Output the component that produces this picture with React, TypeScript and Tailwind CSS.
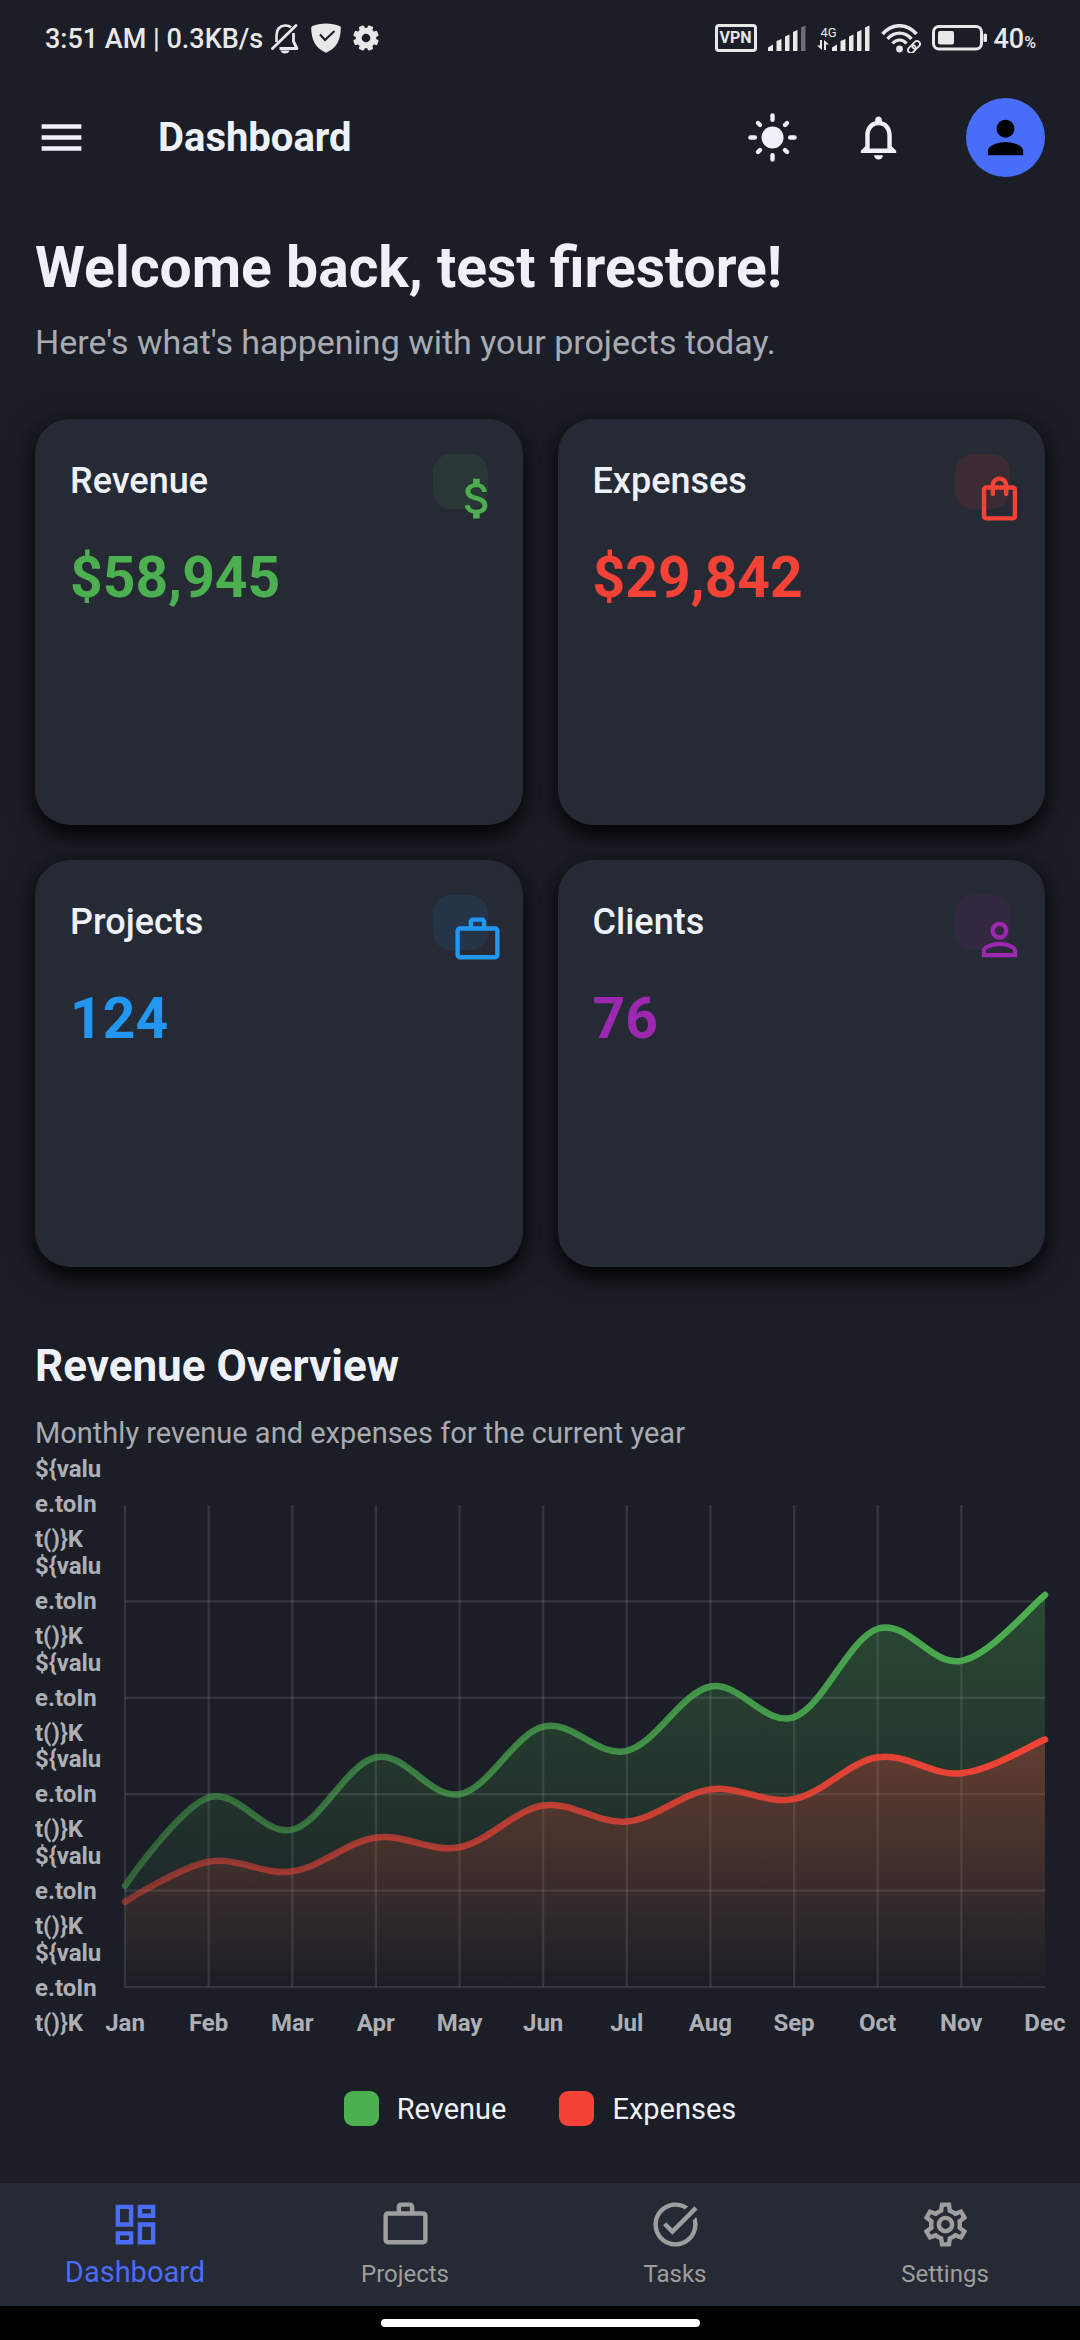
import type { ReactNode } from "react";
import type { IconType } from "react-icons";
import {
  MdAttachMoney,
  MdMenu,
  MdOutlineDashboard,
  MdOutlineNotifications,
  MdOutlinePersonOutline,
  MdOutlineSettings,
  MdOutlineShoppingBag,
  MdPerson,
  MdTaskAlt,
  MdWorkOutline,
} from "react-icons/md";

const MONTHS = ["Jan", "Feb", "Mar", "Apr", "May", "Jun", "Jul", "Aug", "Sep", "Oct", "Nov", "Dec"];
const REVENUE = [6.3, 11.8, 9.8, 14.3, 12, 16.2, 14.7, 18.7, 16.8, 22.3, 20.3, 24.4];
const EXPENSES = [5.3, 7.8, 7.2, 9.3, 8.7, 11.3, 10.3, 12.3, 11.7, 14.3, 13.3, 15.4];
const MAX = 30;
const TICKS = [30, 25, 20, 15, 10, 5];
const PLOT_W = 920;
const PLOT_H = 482;
const SMOOTHNESS = 0.35;

type Point = { x: number; y: number };

function toPoints(values: number[]): Point[] {
  return values.map((v, i) => ({
    x: (i * PLOT_W) / (values.length - 1),
    y: PLOT_H - (v / MAX) * PLOT_H,
  }));
}

function curve(points: Point[]): string {
  let d = `M${points[0].x} ${points[0].y}`;
  let tx = 0;
  let ty = 0;
  for (let i = 1; i < points.length; i++) {
    const prev = points[i - 1];
    const cur = points[i];
    const next = points[Math.min(i + 1, points.length - 1)];
    const c1 = { x: prev.x + tx, y: prev.y + ty };
    tx = ((next.x - prev.x) / 2) * SMOOTHNESS;
    ty = ((next.y - prev.y) / 2) * SMOOTHNESS;
    d += ` C${c1.x} ${c1.y} ${cur.x - tx} ${cur.y - ty} ${cur.x} ${cur.y}`;
  }
  return d;
}

function Series({ id, values, color }: { id: string; values: number[]; color: string }) {
  const line = curve(toPoints(values));
  return (
    <g>
      <defs>
        <linearGradient id={`${id}-fill`} x1="0" y1="0" x2="0" y2="1">
          <stop offset="0" stopColor={color} stopOpacity="0.3" />
          <stop offset="1" stopColor={color} stopOpacity="0" />
        </linearGradient>
        <linearGradient id={`${id}-line`} x1="0" y1="0" x2="1" y2="0">
          <stop offset="0" stopColor={color} stopOpacity="0.45" />
          <stop offset="1" stopColor={color} />
        </linearGradient>
      </defs>
      <path d={`${line} V${PLOT_H} H0 Z`} fill={`url(#${id}-fill)`} />
      <path
        d={line}
        fill="none"
        stroke={`url(#${id}-line)`}
        strokeWidth="6.5"
        strokeLinecap="round"
        vectorEffect="non-scaling-stroke"
      />
    </g>
  );
}

function Plot() {
  return (
    <svg
      viewBox={`0 0 ${PLOT_W} ${PLOT_H}`}
      preserveAspectRatio="none"
      className="block h-[482px] w-full overflow-visible"
      role="img"
      aria-label="Monthly revenue and expenses"
    >
      <g stroke="#ffffff" strokeOpacity="0.11" strokeWidth="2.2">
        {MONTHS.slice(0, -1).map((m, i) => (
          <line key={m} x1={(i * PLOT_W) / 11} x2={(i * PLOT_W) / 11} y1="0" y2={PLOT_H} />
        ))}
        {[1, 2, 3, 4, 5].map((n) => (
          <line key={n} x1="0" x2={PLOT_W} y1={(n * PLOT_H) / 5} y2={(n * PLOT_H) / 5} />
        ))}
      </g>
      <Series id="revenue" values={REVENUE} color="#4caf50" />
      <Series id="expenses" values={EXPENSES} color="#f44336" />
    </svg>
  );
}

function BellOffIcon() {
  return (
    <svg viewBox="0 0 28 31" className="h-[31px] w-7" fill="none" stroke="currentColor">
      <path d="M5.5 19V13C5.500 7 8.500 3 14 2.500C16.500 2.300 18.500 3 20 4.300" strokeWidth="2.600" />
      <path d="M22.500 10V18.500L26 25.500H8.500" strokeWidth="2.800" strokeLinejoin="round" />
      <path d="M1.500 25.500L25 2.500" strokeWidth="2.800" strokeLinecap="round" />
      <path d="M9.500 27.500H18.500C18 29.500 16.500 30.500 14 30.500S10 29.500 9.500 27.500Z" fill="currentColor" stroke="none" />
    </svg>
  );
}

function ShieldIcon() {
  return (
    <svg viewBox="0 0 30 30" className="size-[30px]">
      <path
        d="M15 0.500C20 0.500 25 1.500 28.500 3C29.500 3.500 29.800 4 29.800 5C29.500 17 26 25 15 29.700C4 25 0.500 17 0.200 5C0.200 4 0.500 3.500 1.500 3C5 1.500 10 0.500 15 0.500Z"
        fill="currentColor"
      />
      <path d="M9 11.500L14 17L23.500 8" fill="none" stroke="#1b1e26" strokeWidth="2" />
    </svg>
  );
}

function GearIcon() {
  return (
    <svg viewBox="0 0 26 26" className="size-[26px]" fill="currentColor">
      <circle cx="13" cy="13" r="7.300" fill="none" stroke="currentColor" strokeWidth="6" />
      {[22.5, 67.5, 112.5, 157.5, 202.5, 247.5, 292.5, 337.5].map((a) => (
        <rect key={a} x="10.200" y="0.200" width="5.600" height="5" rx="1.200" transform={`rotate(${a} 13 13)`} />
      ))}
    </svg>
  );
}

function SignalIcon({ weak = false }: { weak?: boolean }) {
  return (
    <svg viewBox="0 0 38 26" className="h-[26px] w-[38px]" fill="currentColor">
      <path d="M0 26V22.500L5 19.500V26Z" />
      <path d="M8.500 26V16L13.500 14V26Z" />
      <path d="M17 26V11.500L21.500 9.500V26Z" />
      <path d="M25 26V7L29.500 5V26Z" />
      <path d="M33 26V2.500L37.500 0.500V26Z" opacity={weak ? 0.4 : 1} />
    </svg>
  );
}

function DataArrowsIcon() {
  return (
    <svg viewBox="0 0 12 10" className="h-2.5 w-3" fill="currentColor">
      <path d="M3 0H5V10L0 5.500H3Z" />
      <path d="M7 10H9V4.500H12L7 0Z" />
    </svg>
  );
}

function WifiIcon() {
  return (
    <svg viewBox="0 0 40 29" className="h-[29px] w-10" fill="none" stroke="currentColor">
      <path d="M1.500 10C11.500 -1 25.500 -1 35.500 10" strokeWidth="3.600" />
      <path d="M6.500 14.800C13.500 7.200 23.500 7.200 30.500 14.800" strokeWidth="3.400" />
      <path d="M11.500 19.600C15.500 14.800 21.500 14.800 25.500 19.600" strokeWidth="3.200" />
      <circle cx="18.500" cy="25" r="3.400" fill="currentColor" stroke="none" />
      <g strokeWidth="1.800" transform="rotate(-45 33 23)">
        <rect x="25.800" y="20" width="8.500" height="6" rx="3" />
        <rect x="31.700" y="20" width="8.500" height="6" rx="3" />
      </g>
    </svg>
  );
}

function BatteryIcon() {
  return (
    <svg viewBox="0 0 56 26" className="h-[26px] w-14">
      <rect x="1.500" y="1.500" width="48" height="22.500" rx="5.500" fill="none" stroke="currentColor" strokeWidth="3" />
      <rect x="6" y="6" width="16" height="13.500" rx="2" fill="currentColor" />
      <rect x="51.500" y="8.500" width="3.500" height="8.500" rx="1.500" fill="currentColor" />
    </svg>
  );
}

function StatusBar() {
  return (
    <div className="flex h-[76px] items-center justify-between pl-[45px] pr-11 text-[#e8e8e8]">
      <div className="flex items-center">
        <span className="pt-0.5 text-[27px] font-medium">3:51 AM | 0.3KB/s</span>
        <span className="ml-2 flex items-center gap-3">
          <BellOffIcon />
          <ShieldIcon />
          <GearIcon />
        </span>
      </div>
      <div className="flex items-center gap-[11px]">
        <span className="flex h-7 w-[42px] items-center justify-center rounded-[4px] border-3 border-current text-[16px] leading-none font-bold">
          VPN
        </span>
        <SignalIcon weak />
        <span className="flex items-end">
          <span className="flex w-[21px] flex-col items-start pb-px">
            <span className="pl-1 text-[13px] leading-[15px]">4G</span>
            <DataArrowsIcon />
          </span>
          <span className="-ml-1.5">
            <SignalIcon />
          </span>
        </span>
        <WifiIcon />
        <span className="flex items-center gap-1.5">
          <BatteryIcon />
          <span className="pt-0.5 text-[27px] leading-none font-medium">
            40<span className="text-[16px]">%</span>
          </span>
        </span>
      </div>
    </div>
  );
}

function SunIcon() {
  return (
    <svg viewBox="0 0 24 24" className="size-[53px]" fill="currentColor">
      <circle cx="12" cy="12" r="5" />
      {[0, 45, 90, 135, 180, 225, 270, 315].map((a) => (
        <rect
          key={a}
          x="11"
          y={a % 90 === 0 ? 1 : 1.7}
          width="2"
          height={a % 90 === 0 ? 4 : 3.3}
          rx="1"
          transform={`rotate(${a} 12 12)`}
        />
      ))}
    </svg>
  );
}

function AppBar() {
  return (
    <header className="flex h-[123px] items-center px-[35px]">
      <button type="button" aria-label="Open menu">
        <MdMenu className="size-[53px]" />
      </button>
      <h1 className="ml-[70px] text-[40px] font-bold">Dashboard</h1>
      <div className="ml-auto flex items-center gap-[53px]">
        <button type="button" aria-label="Toggle theme">
          <SunIcon />
        </button>
        <button type="button" aria-label="Notifications">
          <MdOutlineNotifications className="size-[53px]" />
        </button>
        <button
          type="button"
          aria-label="Account"
          className="ml-2 flex size-[79px] items-center justify-center rounded-full bg-[#496dfb] text-black"
        >
          <MdPerson className="size-[53px]" />
        </button>
      </div>
    </header>
  );
}

type Stat = { title: string; value: string; icon: IconType; text: string; badge: string };

const STATS: Stat[] = [
  { title: "Revenue", value: "$58,945", icon: MdAttachMoney, text: "text-[#4caf50]", badge: "bg-[#4caf50]/10" },
  { title: "Expenses", value: "$29,842", icon: MdOutlineShoppingBag, text: "text-[#f44336]", badge: "bg-[#f44336]/10" },
  { title: "Projects", value: "124", icon: MdWorkOutline, text: "text-[#2196f3]", badge: "bg-[#2196f3]/10" },
  { title: "Clients", value: "76", icon: MdOutlinePersonOutline, text: "text-[#9c27b0]", badge: "bg-[#9c27b0]/10" },
];

function StatCard({ title, value, icon: Icon, text, badge }: Stat) {
  return (
    <article className="aspect-[6/5] rounded-[35px] bg-[#262a34] p-[35px] shadow-[0_12px_18px_-2px_rgba(0,0,0,0.75),0_4px_28px_rgba(0,0,0,0.5)]">
      <div className="flex items-center justify-between">
        <h3 className="text-[36px] leading-[55px] font-medium">{title}</h3>
        <div className={`size-[55px] rounded-[18px] pt-[18px] pl-[18px] ${badge} ${text}`}>
          <Icon className="size-[53px] max-w-none" />
        </div>
      </div>
      <p className={`mt-[35px] text-[57px] leading-[68px] font-bold ${text}`}>{value}</p>
    </article>
  );
}

function LegendItem({ swatch, children }: { swatch: string; children: ReactNode }) {
  return (
    <li className="flex items-center gap-[18px]">
      <span className={`size-[35px] rounded-[9px] ${swatch}`} />
      <span className="pt-0.5 text-[29px] leading-[35px]">{children}</span>
    </li>
  );
}

function RevenueChart() {
  return (
    <section className="mt-[66px]">
      <h2 className="text-[44px] leading-[66px] font-bold">Revenue Overview</h2>
      <p className="mt-[13px] text-[29px] leading-[42px] text-[#a9abb2]">
        Monthly revenue and expenses for the current year
      </p>
      <div className="mt-[3px] flex items-start text-[24px] font-bold text-[#adafb6]">
        <div className="flex h-[580px] w-[90px] shrink-0 flex-col">
          {TICKS.map((t) => (
            <div key={t} className="flex min-h-0 flex-1 flex-col justify-center leading-[35px]">
              <span>{"${valu"}</span>
              <span>e.toIn</span>
              <span>{"t()}K"}</span>
            </div>
          ))}
        </div>
        <div className="min-w-0 flex-1 pt-12">
          <Plot />
          <div className="mt-[18px] flex justify-between leading-9">
            {MONTHS.map((m) => (
              <span key={m} className="flex w-0 justify-center">
                {m}
              </span>
            ))}
          </div>
        </div>
      </div>
      <ul className="mt-[49px] flex justify-center gap-[53px]">
        <LegendItem swatch="bg-[#4caf50]">Revenue</LegendItem>
        <LegendItem swatch="bg-[#f44336]">Expenses</LegendItem>
      </ul>
    </section>
  );
}

const NAV: { label: string; icon: IconType; active?: boolean }[] = [
  { label: "Dashboard", icon: MdOutlineDashboard, active: true },
  { label: "Projects", icon: MdWorkOutline },
  { label: "Tasks", icon: MdTaskAlt },
  { label: "Settings", icon: MdOutlineSettings },
];

function BottomNav() {
  return (
    <nav className="grid grid-cols-4 bg-[#262a34]">
      {NAV.map(({ label, icon: Icon, active }) => (
        <a
          key={label}
          href="#"
          aria-current={active ? "page" : undefined}
          className={`flex flex-col items-center pt-[15px] ${
            active
              ? "pb-4 text-[29px] leading-[35px] text-[#4a6cf7]"
              : "pb-3 text-[24px] leading-[39px] text-[#9e9e9e]"
          }`}
        >
          <Icon className="mb-1 size-[53px]" />
          {label}
        </a>
      ))}
    </nav>
  );
}

export default function App() {
  return (
    <div className="flex min-h-screen flex-col bg-[#1b1e26] font-[Roboto,sans-serif] text-[#eef1f8]">
      <StatusBar />
      <AppBar />
      <main className="px-[35px] pt-[35px] pb-[56px]">
        <h2 className="text-[57px] leading-[68px] font-bold">Welcome back, test firestore!</h2>
        <p className="mt-4 text-[34px] leading-[48px] text-[#a9abb2]">
          Here's what's happening with your projects today.
        </p>
        <div className="mt-[53px] grid grid-cols-2 gap-[35px]">
          {STATS.map((s) => (
            <StatCard key={s.title} {...s} />
          ))}
        </div>
        <RevenueChart />
      </main>
      <footer className="mt-auto">
        <BottomNav />
        <div className="flex h-[35px] items-center justify-center bg-black">
          <div className="h-2 w-[319px] rounded-full bg-white" />
        </div>
      </footer>
    </div>
  );
}
